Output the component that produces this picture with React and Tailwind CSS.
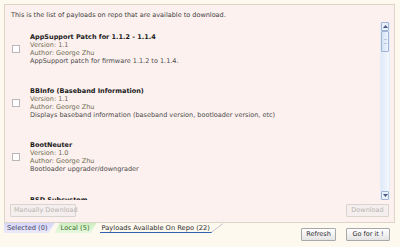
import React from "react";

const payloads = [
  {
    name: "AppSupport Patch for 1.1.2 - 1.1.4",
    version: "1.1",
    author: "George Zhu",
    desc: "AppSupport patch for firmware 1.1.2 to 1.1.4.",
  },
  {
    name: "BBInfo (Baseband Information)",
    version: "1.1",
    author: "George Zhu",
    desc: "Displays baseband information (baseband version, bootloader version, etc)",
  },
  {
    name: "BootNeuter",
    version: "1.0",
    author: "George Zhu",
    desc: "Bootloader upgrader/downgrader",
  },
];

const Item = ({ p }) => (
  <div className="flex items-center h-[54px] pl-[4px]">
    <span className="w-[8px] h-[8px] border border-[#b8b8b8] bg-white shrink-0" />
    <div className="ml-[10px] leading-[8px]">
      <div className="font-bold text-[#1a1a1a]">{p.name}</div>
      <div className="text-[#6c6c50]">Version: {p.version}</div>
      <div className="text-[#6c6c50]">Author: {p.author}</div>
      <div className="text-[#4a4a4a]">{p.desc}</div>
    </div>
  </div>
);

const Scrollbar = () => (
  <div className="w-[10px] h-full flex flex-col bg-gradient-to-r from-[#dfe9f8] to-[#f4f8fe] border-x border-[#e4ecf8]">
    <div className="h-[9px] border border-[#9fb4d4] rounded-[1px] bg-[#e8f0fb] flex items-center justify-center">
      <svg width="5" height="3" viewBox="0 0 5 3"><path d="M0 3 L2.5 0 L5 3Z" fill="#4a5a78" /></svg>
    </div>
    <div className="h-[21px] border border-[#9fb4d4] rounded-[1px] bg-gradient-to-r from-[#d4e2f6] to-[#eef4fd] flex items-center justify-center">
      <div className="w-[3px] h-[5px] border-y border-[#b8c8e0]" />
    </div>
    <div className="flex-1" />
    <div className="h-[9px] border border-[#9fb4d4] rounded-[1px] bg-[#e8f0fb] flex items-center justify-center">
      <svg width="5" height="3" viewBox="0 0 5 3"><path d="M0 0 L2.5 3 L5 0Z" fill="#4a5a78" /></svg>
    </div>
  </div>
);

const Btn = ({ children, disabled, className = "" }) => (
  <button
    className={`h-[13px] px-[3px] border rounded-[1px] leading-[11px] whitespace-nowrap ${
      disabled
        ? "border-[#d8d4d0] bg-[#f4efee] text-[#b8b4b0]"
        : "border-[#a8a8a8] bg-gradient-to-b from-[#ffffff] to-[#e4e4e4] text-[#303030]"
    } ${className}`}
  >
    {children}
  </button>
);

export default function App() {
  return (
    <div
      className="w-[400px] h-[247px] bg-[#fdf9ee] pt-[4px] px-[4px] text-[6.5px] overflow-hidden"
      style={{ fontFamily: '"DejaVu Sans", Verdana, sans-serif' }}
    >
      <div className="w-[391px] h-[219px] border border-[#ddd6c8] bg-[#fdf1ef] flex flex-col">
        <div className="pl-[6px] pt-[6px] h-[17px] text-[#404040] leading-[8px]">
          This is the list of payloads on repo that are available to download.
        </div>
        <div className="flex h-[178px] pl-[3px] pr-[4px]">
          <div className="flex-1 overflow-hidden">
            {payloads.map((p) => (
              <Item key={p.name} p={p} />
            ))}
            <div className="pl-[22px] pt-[12px] leading-[8px] font-bold text-[#1a1a1a]">
              BSD Subsystem
            </div>
          </div>
          <Scrollbar />
        </div>
        <div className="flex justify-between px-[5px] pt-[4px]">
          <Btn disabled className="w-[66px]">Manually Download</Btn>
          <Btn disabled className="w-[43px]">Download</Btn>
        </div>
      </div>
      <div className="flex items-start text-[6.7px]">
        <div className="flex h-[10px] leading-[10px]">
          <div className="pl-[3px] pr-[7px] bg-gradient-to-b from-[#d6d6f8] to-[#ecebfb] text-[#404060] [clip-path:polygon(0_0,100%_0,calc(100%-6px)_100%,0_100%)]">
            Selected (0)
          </div>
          <div className="pl-[6px] pr-[7px] bg-gradient-to-b from-[#cdeec0] to-[#e8f8e0] text-[#3a6a2a] [clip-path:polygon(5px_0,100%_0,calc(100%-6px)_100%,0_100%)]">
            Local (5)
          </div>
          <div className="relative pl-[5px] pr-[14px] text-[#303030]">
            Payloads Available On Repo (22)
            <div className="absolute left-[3px] right-[12px] bottom-0 h-[1.5px] bg-[#3060b0]" />
            <svg className="absolute right-0 top-0" width="14" height="10" viewBox="0 0 14 10">
              <path d="M1 9.5 L13 0.5" stroke="#b8b8c8" strokeWidth="0.8" fill="none" />
            </svg>
          </div>
        </div>
        <div className="flex-1" />
        <div className="flex gap-[10px] pt-[5px] pr-[6px] text-[6.5px]">
          <Btn className="w-[35px]">Refresh</Btn>
          <Btn className="w-[44px]">Go for it !</Btn>
        </div>
      </div>
    </div>
  );
}
